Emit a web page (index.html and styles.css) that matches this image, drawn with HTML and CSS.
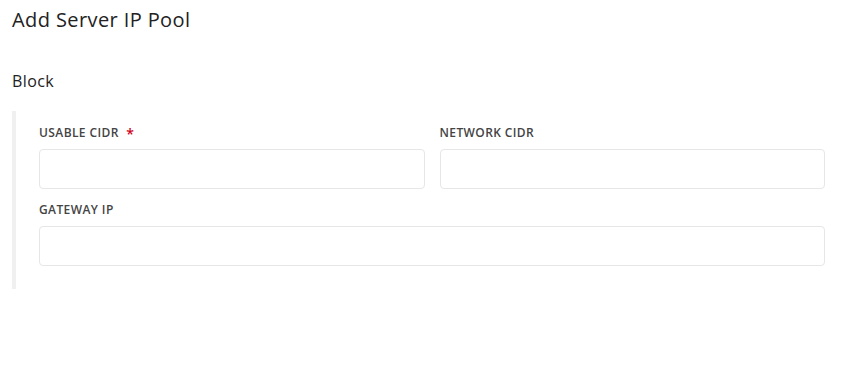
FILE: index.html
```html
<!DOCTYPE html>
<html lang="en">
<head>
<meta charset="utf-8">
<title>Add Server IP Pool</title>
<link rel="stylesheet" href="styles.css">
</head>
<body>
  <main class="page">
    <h1 class="title">Add Server IP Pool</h1>
    <h2 class="section-title">Block</h2>
    <div class="block">
      <div class="grid">
        <div class="field">
          <label class="label">USABLE CIDR <span class="req">*</span></label>
          <input class="input" type="text">
        </div>
        <div class="field">
          <label class="label">NETWORK CIDR</label>
          <input class="input" type="text">
        </div>
        <div class="field full">
          <label class="label">GATEWAY IP</label>
          <input class="input" type="text">
        </div>
      </div>
    </div>
  </main>
</body>
</html>
```

FILE: styles.css
```css
* { box-sizing: border-box; }
html, body { margin: 0; padding: 0; background: #fff; }
body {
  font-family: "Open Sans", "Noto Sans", sans-serif;
  color: #222;
}
.page {
  padding: 5px 43px 0 12px;
}
.title {
  margin: 0;
  font-size: 20px;
  font-weight: 400;
  line-height: 30px;
  letter-spacing: 0.4px;
}
.section-title {
  margin: 34px 0 0;
  font-size: 16px;
  font-weight: 400;
  line-height: 24px;
  letter-spacing: 0.4px;
}
.block {
  margin-top: 18px;
  border-left: 4px solid #f0f0f0;
  padding: 14px 0 23px 23px;
}
.grid {
  display: grid;
  grid-template-columns: 1fr 1fr;
  column-gap: 15px;
  row-gap: 13px;
}
.field { display: flex; flex-direction: column; }
.full { grid-column: 1 / -1; }
.label {
  font-size: 12px;
  font-weight: 600;
  letter-spacing: 0.4px;
  color: #444;
  line-height: 16px;
  margin-bottom: 8px;
}
.req {
  color: #d0021b;
  font-size: 14px;
  margin-left: 4px;
  vertical-align: -2px;
  line-height: 0;
}
.input {
  height: 40px;
  border: 1px solid #e6e6e6;
  border-radius: 4px;
  background: #fff;
  font: inherit;
  outline: none;
}
```
